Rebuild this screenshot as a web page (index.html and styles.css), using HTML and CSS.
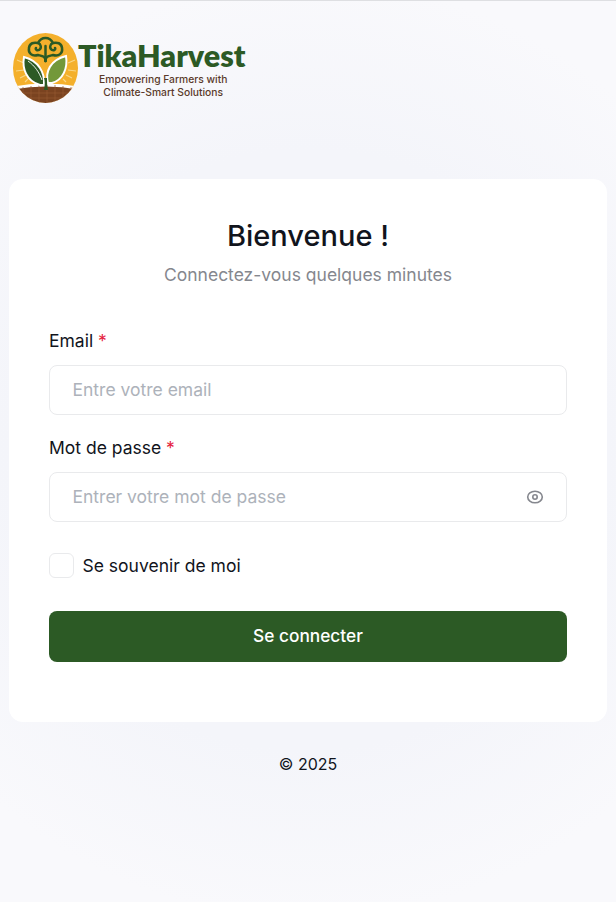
FILE: index.html
```html
<!DOCTYPE html>
<html lang="fr">
<head>
    <meta charset="UTF-8">
    <meta name="viewport" content="width=device-width, initial-scale=1.0">
    <title>TikaHarvest - Connexion</title>
    <link rel="stylesheet" href="styles.css">
</head>
<body>
    <header class="brand">
        <svg class="brand-mark" width="66" height="71" viewBox="0 0 66 71">
            <defs>
                <clipPath id="disc"><ellipse cx="32.500" cy="35" rx="32.500" ry="35"/></clipPath>
            </defs>
            <g clip-path="url(#disc)">
                <rect width="66" height="71" fill="#f4b02c"/>
                <!-- sun rays -->
                <path d="M4 27l7 3M3 38l8-1M7 45l6-3M62 27l-7 3M63 38l-8-1M59 45l-6-3M50 46l3 3M15 46l-3 3" stroke="#f9d785" stroke-width="1.200"/>
                <!-- soil -->
                <path d="M-2 54q35-7 70 0v18h-70z" fill="#fff"/>
                <path d="M-2 57q35-7 70 0v16h-70z" fill="#7a4320"/>
                <path d="M10 54v18M18 53v18M26 52v18M34 52v18M42 52v18M50 53v18M58 54v18M4 60h58M6 65h54" stroke="#955a30" stroke-width=".700"/>
            </g>
            <!-- tree scrolls -->
            <g fill="none" stroke="#2c5a25" stroke-width="2.500" stroke-linecap="round">
                <path d="M32.500 28C32.500 23 29 23 25 22C19 24 15 20 16 15C16.500 10 21 9 25 10C28 11 29 15 26 17C24 18 22 16 23 15"/>
                <path d="M32.500 28C32.500 23 36 23 40 22C46 24 50 20 49 15C48.500 10 44 9 40 10C37 11 36 15 39 17C41 18 43 16 42 15"/>
                <path d="M25 10C27 6 30 5 32.500 5S38 6 40 10M32.500 28V13"/>
            </g>
            <!-- leaves -->
            <path d="M31 52C32 40 26 28 11 24c-2 11 2 24 16 28z" fill="#2c5a25" stroke="#fff" stroke-width="2"/>
            <path d="M35 50c-3-11 2-23 18-27 2 12-3 24-14 27z" fill="#73983a" stroke="#fff" stroke-width="2"/>
            <path d="M15 28c7 5 11 11 14 19" fill="none" stroke="#fff" stroke-width=".900"/>
            <path d="M31 57c1-5 1-9 0-12l3 0c0 4 0 8 1 12z" fill="#2c5a25"/>
        </svg>
        <div class="brand-text">
            <div class="brand-name">TikaHarvest</div>
            <div class="brand-tag">Empowering Farmers with<br>Climate-Smart Solutions</div>
        </div>
    </header>

    <main class="login-card">
        <h1 class="login-title">Bienvenue !</h1>
        <p class="login-sub">Connectez-vous quelques minutes</p>

        <form class="login-form">
            <label class="field-label" for="email">Email <span class="req">*</span></label>
            <input class="field-input" type="text" id="email" placeholder="Entre votre email">

            <label class="field-label label-pass" for="password">Mot de passe <span class="req">*</span></label>
            <div class="pass-wrap">
                <input class="field-input" type="password" id="password" placeholder="Entrer votre mot de passe">
                <svg class="eye" width="18" height="18" viewBox="0 0 18 18" fill="none" stroke="#85878e" stroke-width="1.600">
                    <ellipse cx="9" cy="9" rx="7.300" ry="5.700"/>
                    <circle cx="9" cy="9" r="2.200"/>
                </svg>
            </div>

            <label class="remember">
                <span class="check-box"></span>
                Se souvenir de moi
            </label>

            <button class="submit-btn" type="button">Se connecter</button>
        </form>
    </main>

    <footer class="copy">© 2025</footer>
</body>
</html>
```
FILE: styles.css
```css
* {
    box-sizing: border-box;
}
html, body {
    height: 100%;
}
body {
    margin: 0;
    padding: 0 9px;
    border-top: 1px solid #dedfe2;
    overflow: hidden;
    font-family: Inter, "Liberation Sans", sans-serif;
    color: #11141c;
    background-color: #f9f9fc;
    background-image: radial-gradient(circle at 308px 450px, #f4f5fa 0, #f4f5fa 300px, #f9f9fc 470px);
}
.brand {
    display: flex;
    align-items: flex-start;
    height: 178px;
    padding: 32px 0 0 4px;
}
.brand-text {
    margin-left: -1px;
}
.brand-name {
    margin-top: 7px;
    font-family: Lato, sans-serif;
    font-size: 30.500px;
    font-weight: 800;
    line-height: 30px;
    color: #2c5a25;
}
.brand-tag {
    margin-top: 3px;
    padding-left: 3px;
    font-size: 10.300px;
    line-height: 12.500px;
    font-weight: 500;
    text-align: center;
    color: #5a3a2a;
}
.login-card {
    height: 543px;
    padding: 40px 40px 40px;
    background: #fff;
    border-radius: 14px;
    text-align: center;
}
.login-title {
    margin: 0;
    font-size: 29px;
    font-weight: 500;
    line-height: 34px;
    color: #11141c;
}
.login-sub {
    margin: 10px 0 0;
    font-size: 17.500px;
    line-height: 24px;
    color: #85878e;
}
.login-form {
    margin-top: 42px;
    text-align: left;
}
.field-label {
    display: block;
    font-size: 17.500px;
    line-height: 24px;
}
.label-pass {
    margin-top: 21px;
}
.req {
    color: #e5243f;
}
.field-input {
    display: block;
    width: 100%;
    height: 50px;
    margin-top: 12px;
    padding: 0 22.500px 2px;
    border: 1px solid #e9eaec;
    border-radius: 8px;
    font-family: inherit;
    font-size: 17.500px;
    color: #11141c;
    background: #fff;
}
.field-input::placeholder {
    color: #adb2ba;
    opacity: 1;
}
.pass-wrap {
    position: relative;
}
.eye {
    position: absolute;
    right: 23px;
    top: 16px;
}
.remember {
    display: flex;
    align-items: center;
    gap: 8.500px;
    margin-top: 31px;
    font-size: 17.500px;
    line-height: 25px;
}
.check-box {
    width: 25px;
    height: 25px;
    border: 1px solid #e9eaec;
    border-radius: 6px;
}
.submit-btn {
    display: block;
    width: 100%;
    height: 51px;
    margin-top: 33px;
    padding: 0 0 2px;
    border: none;
    border-radius: 8px;
    font-family: inherit;
    font-size: 17.300px;
    font-weight: 500;
    color: #fff;
    background: #2c5a25;
    cursor: pointer;
}
.copy {
    margin-top: 31px;
    font-size: 16px;
    line-height: 22px;
    text-align: center;
    color: #11141c;
}
```
